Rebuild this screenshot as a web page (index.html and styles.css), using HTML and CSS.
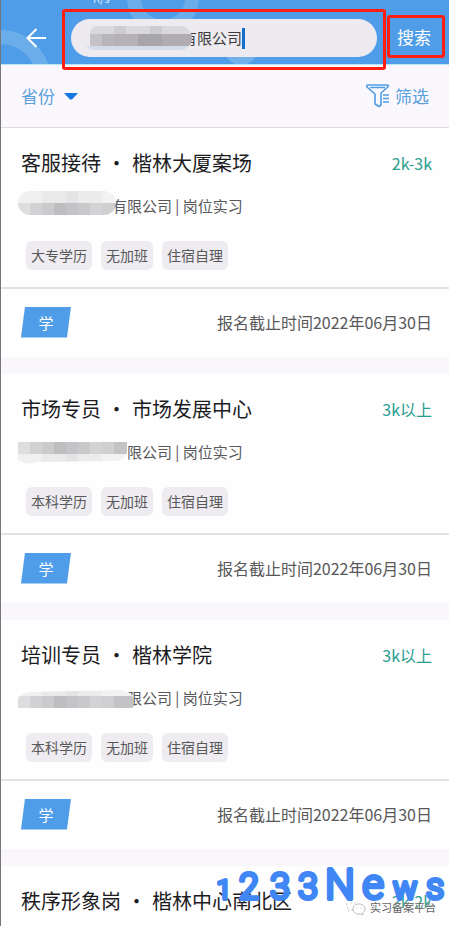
FILE: index.html
```html
<!DOCTYPE html>
<html lang="zh-CN">
<head>
<meta charset="utf-8">
<meta name="viewport" content="width=device-width, initial-scale=1">
<title>岗位搜索</title>
<link rel="stylesheet" href="styles.css">
</head>
<body>
<svg class="defs" width="0" height="0" aria-hidden="true">
  <defs>
    <g id="pixels">
      <path fill="#dedddf" d="M0 0h12v12H0z"/><path fill="#d2d1d3" d="M12 0h12v12H12z"/><path fill="#cbcacc" d="M24 0h12v12H24z"/><path fill="#bebdbf" d="M36 0h12v12H36z"/><path fill="#c5c3c7" d="M48 0h12v12H48z"/><path fill="#c9c8cb" d="M60 0h12v12H60z"/><path fill="#d3d2d5" d="M72 0h12v12H72z"/><path fill="#cfced1" d="M84 0h12v12H84z"/><path fill="#c3c2c5" d="M96 0h24v12H96z"/>
    </g>
    <g id="pixels-light">
      <path fill="#f0f0f1" d="M0 0h24v12H0z"/><path fill="#eaeaeb" d="M24 0h24v12H24z"/><path fill="#e4e4e6" d="M48 0h12v12H48z"/><path fill="#ececed" d="M60 0h24v12H60z"/><path fill="#f2f2f3" d="M84 0h36v12H84z"/>
    </g>
  </defs>
</svg>
<div class="app">
  <header class="topbar">
    <svg class="rings" width="300" height="64" aria-hidden="true">
      <g fill="none" stroke="#fff" stroke-opacity=".16" stroke-width="14"><circle cx="-1" cy="81" r="44"/><circle cx="162" cy="-2" r="29"/></g>
      <circle cx="240" cy="48" r="17" fill="#fff" fill-opacity=".2"/>
    </svg>
    <span class="netspeed">K/s</span>
    <button class="back" type="button" aria-label="返回">
      <svg width="20" height="20" viewBox="0 0 20 20" fill="none" stroke="#fff" stroke-width="2"><path d="M10.500 1L1.500 10l9 9M1.500 10H20"/></svg>
    </button>
    <div class="search">
      <div class="pill">
        <svg class="mask" width="106" height="24" aria-hidden="true">
          <clipPath id="m0"><path d="M4 8Q4 0 12 0H94a12 12 0 0 1 0 24H10Q4 24 0 20H4z"/></clipPath>
          <g clip-path="url(#m0)"><path fill="#d9d8dc" d="M0 0h106v8H0z"/><path fill="#cdccd1" d="M28 0h12v8H28zM64 0h12v8H64z"/><path fill="#c5c2c7" d="M0 8h106v12H0z"/><path fill="#b8b5ba" d="M16 8h12v12H16z"/><path fill="#b5b1b6" d="M28 8h24v12H28z"/><path fill="#a9a6ab" d="M52 8h24v12H52z"/><path fill="#b0acb2" d="M76 8h30v12H76z"/><path fill="#d3dced" d="M0 20h106v4H0z"/></g>
        </svg>
        <input class="query" type="text" value="有限公司" aria-label="搜索公司">
        <i class="caret"></i>
      </div>
    </div>
    <button class="go" type="button">搜索</button>
  </header>

  <nav class="filters">
    <button class="filter" type="button">省份
      <svg width="14" height="7" viewBox="0 0 14 7"><path fill="#1677e0" d="M0 0h14L8 6.500H6z"/></svg>
    </button>
    <button class="filter" type="button">
      <svg width="24" height="24" viewBox="0 0 24 24" fill="none" stroke="#4f9de6" stroke-width="1.600" stroke-linejoin="round"><path d="M1.500 1h20q1 0 .8 1.500L15 9v12l-2 1.500-4-2.500V10L1 3q-.5-2 .5-2zM4 3.500h15M17 11h6M17 14.500h6M17 18h6"/></svg>
      筛选</button>
  </nav>

  <main class="jobs">
    <article class="job">
      <div class="info">
        <div class="head"><h2 class="title">客服接待<span class="dot">•</span>楷林大厦案场</h2><span class="pay">2k-3k</span></div>
        <p class="company"><svg class="mask first" width="98" height="24" aria-hidden="true"><clipPath id="m1"><rect width="98" height="24" rx="12"/></clipPath><g clip-path="url(#m1)"><use href="#pixels-light"/><use href="#pixels" y="12"/></g></svg>有限公司 | 岗位实习</p>
        <ul class="tags"><li>大专学历</li><li>无加班</li><li>住宿自理</li></ul>
      </div>
      <div class="foot"><span class="badge">学</span><span>报名截止时间2022年06月30日</span></div>
    </article>

    <article class="job">
      <div class="info">
        <div class="head"><h2 class="title">市场专员<span class="dot">•</span>市场发展中心</h2><span class="pay">3k以上</span></div>
        <p class="company"><svg class="mask" width="109" height="22" aria-hidden="true"><clipPath id="m2"><path d="M0 0h109v10q-2 9-14 9L18 20Q9 24 0 18z"/></clipPath><g clip-path="url(#m2)"><use href="#pixels"/><use href="#pixels-light" y="12"/></g></svg>限公司 | 岗位实习</p>
        <ul class="tags"><li>本科学历</li><li>无加班</li><li>住宿自理</li></ul>
      </div>
      <div class="foot"><span class="badge">学</span><span>报名截止时间2022年06月30日</span></div>
    </article>

    <article class="job">
      <div class="info">
        <div class="head"><h2 class="title">培训专员<span class="dot">•</span>楷林学院</h2><span class="pay">3k以上</span></div>
        <p class="company"><svg class="mask third" width="115" height="18" aria-hidden="true"><clipPath id="m3"><path d="M0 18V8Q4 2 12 2L104 0q10 2 11 8v10z"/></clipPath><g clip-path="url(#m3)"><use href="#pixels-light" y="-6"/><use href="#pixels" y="6"/></g></svg>限公司 | 岗位实习</p>
        <ul class="tags"><li>本科学历</li><li>无加班</li><li>住宿自理</li></ul>
      </div>
      <div class="foot"><span class="badge">学</span><span>报名截止时间2022年06月30日</span></div>
    </article>

    <article class="job">
      <div class="info">
        <div class="head"><h2 class="title">秩序形象岗<span class="dot">•</span>楷林中心南北区</h2><span class="pay">2k-2k</span></div>
      </div>
    </article>
  </main>

  <div class="source">
    <svg width="20" height="18" viewBox="0 0 20 18" fill="#fff" stroke="#aaa" stroke-width=".8"><path d="M7 1C3 1 .5 3.500.5 6.500c0 2 1 3.500 2.500 4.500l-.5 2 2.500-1.200h3" stroke-dasharray="2 2"/><path d="M13 6c-3.500 0-6 2.200-6 5s2.500 5 6 5l2 0 2 1-.5-2c1.500-1 2.500-2.300 2.500-4 0-2.800-2.500-5-6-5z"/><path d="M11 9.500v1M15 9.500v1M5 4.500v1M9 4.500v1"/></svg>
    <span>实习备案平台</span>
  </div>
  <svg class="brand" width="236" height="60" viewBox="0 0 236 60">
    <text y="45" text-anchor="middle"><tspan x="11" class="one">1</tspan><tspan x="36">2</tspan><tspan x="67">3</tspan><tspan x="95">3</tspan><tspan x="127" class="cap">N</tspan><tspan x="160" class="cap">e</tspan><tspan x="192" class="low">w</tspan><tspan x="222" class="ess">s</tspan></text>
  </svg>
</div>
</body>
</html>
```
FILE: styles.css
```css
* { box-sizing: border-box; margin: 0; padding: 0; }

body {
  font-family: "Noto Sans CJK SC", sans-serif;
  background: #fefefe;
  color: #58585a;
}

button, input { font: inherit; border: 0; background: none; }
.defs { position: absolute; }

.app {
  position: relative;
  height: 100vh;
  overflow: hidden;
  border-left: 1px solid #77777b;
}

.topbar {
  position: relative;
  display: flex;
  align-items: center;
  height: 65px;
  padding: 0 4px 0 25px;
  background: #4f9de8;
  border-bottom: 1px solid #b8e4f4;
}
.rings { position: absolute; left: 0; top: 0; }
.netspeed {
  position: absolute;
  left: 92px;
  top: -8px;
  font-size: 11px;
  line-height: 12px;
  color: #d5e8fa;
}
.back { display: flex; position: relative; margin-top: 11px; }

.search {
  position: relative;
  flex: 1;
  margin: 9px 0 0 16px;
  height: 61px;
  padding: 7px 6px;
  border: 3px solid #ff1e10;
  border-radius: 3px;
  align-self: flex-start;
}
.pill {
  display: flex;
  align-items: center;
  height: 38px;
  padding-left: 15px;
  border-radius: 19px;
  background: #edebf0;
}
.mask { position: relative; flex: none; }
.pill .mask { margin-right: -10px; }
.query {
  width: 60px;
  height: 24px;
  padding-bottom: 2px;
  font-size: 15px;
  color: #3c3c40;
  outline: 0;
}
.caret { width: 3px; height: 21px; background: #1470cc; }

.go {
  position: relative;
  align-self: flex-start;
  width: 58px;
  height: 43px;
  margin: 15px 0 0 1px;
  padding: 0 4px 0 0;
  border: 3px solid #ff1e10;
  border-radius: 3px;
  color: #fff;
  font-size: 17px;
}

.filters {
  display: flex;
  justify-content: space-between;
  align-items: center;
  height: 63px;
  padding: 0 20px;
  background: #faf8fc;
  border-bottom: 1px solid #dededf;
}
.filter {
  display: flex;
  align-items: center;
  gap: 9px;
  font-size: 17px;
  line-height: 24px;
  color: #5b9fdd;
}
.filter:last-child { gap: 5px; }

.jobs { display: grid; gap: 17px; background: #f9f7fb; }
.job { background: #fefefe; }
.info { padding: 21px 17px 17px 20px; }
.head { display: flex; justify-content: space-between; align-items: center; }
.title {
  display: flex;
  font-size: 20px;
  font-weight: 400;
  line-height: 28px;
  color: #1c1c1f;
}
.dot { width: 31px; text-align: center; }
.pay { font-size: 16px; line-height: 28px; color: #2a9d8f; }

.company {
  display: flex;
  align-items: center;
  height: 24px;
  margin-top: 16px;
  font-size: 15px;
  white-space: pre;
}
.company .mask { margin: 3px 0 0 -3px; }
.company .first { margin: -2px -4px 0 -3px; align-self: flex-start; }
.company .third { margin-right: -6px; }

.tags {
  display: flex;
  gap: 9px;
  margin: 24px 0 0 5px;
  list-style: none;
}
.tags li {
  padding: 0 5px;
  border-radius: 6px;
  background: #eeecf0;
  font-size: 14px;
  line-height: 29px;
}

.foot {
  display: flex;
  justify-content: space-between;
  align-items: center;
  height: 70px;
  padding: 0 17px 2px 20px;
  border-top: 2px solid #e3e3e5;
  font-size: 16px;
}
.badge {
  width: 50px;
  line-height: 31px;
  text-align: center;
  font-size: 15px;
  color: #fff;
  background: #4f9de8;
  clip-path: polygon(4px 0, 100% 0, calc(100% - 4px) 100%, 0 100%);
}

.source {
  position: absolute;
  right: 13px;
  bottom: 10px;
  display: flex;
  align-items: center;
  gap: 4px;
  font-size: 11px;
  line-height: 16px;
  color: #666;
  text-shadow: 0 0 1px #fff, 1px 1px #fff;
}

.brand {
  position: absolute;
  right: 0;
  bottom: 12px;
  font-family: Roboto, sans-serif;
  font-size: 36px;
  font-weight: 300;
  fill: #4086f5;
  stroke: #4086f5;
  stroke-width: 4px;
  stroke-linejoin: round;
}
.brand .one { font-size: 26px; }
.brand .cap { font-size: 42px; }
.brand .low { font-size: 32px; }
.brand .ess { font-size: 36px; }
```
